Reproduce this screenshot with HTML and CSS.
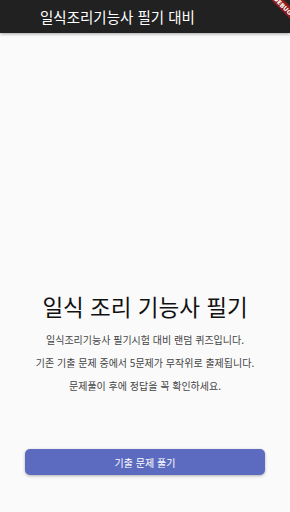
FILE: index.html
```html
<!DOCTYPE html>
<html lang="ko">
<head>
    <meta charset="UTF-8">
    <meta name="viewport" content="width=device-width, initial-scale=1.0">
    <title>일식조리기능사 필기 대비</title>
    <link rel="stylesheet" href="styles.css">
</head>
<body>
    <header class="app-bar">
        <h1 class="app-title">일식조리기능사 필기 대비</h1>
        <div class="debug-banner">DEBUG</div>
    </header>

    <main class="home">
        <section class="intro">
            <h2 class="intro-title">일식 조리 기능사 필기</h2>
            <p class="intro-text">일식조리기능사 필기시험 대비 랜덤 퀴즈입니다.</p>
            <p class="intro-text">기존 기출 문제 중에서 5문제가 무작위로 출제됩니다.</p>
            <p class="intro-text">문제풀이 후에 정답을 꼭 확인하세요.</p>
        </section>

        <button type="button" class="start-button">기출 문제 풀기</button>
    </main>
</body>
</html>
```

FILE: styles.css
```css
html, body {
    margin: 0;
    padding: 0;
    height: 100%;
}
body {
    font-family: "Noto Sans CJK KR", Roboto, sans-serif;
    background-color: #fafafa;
    color: #212121;
    overflow: hidden;
}
.app-bar {
    position: relative;
    height: 33px;
    background-color: #212121;
    box-shadow: 0 1px 3px rgba(0, 0, 0, 0.35);
    display: flex;
    align-items: center;
    padding-left: 40px;
    overflow: hidden;
}
.app-title {
    margin: 0;
    font-size: 14.5px;
    font-weight: 400;
    color: #fff;
}
.debug-banner {
    position: absolute;
    top: 1px;
    right: -23px;
    width: 60px;
    transform: rotate(45deg);
    background-color: #8e1b1b;
    color: #fff;
    font-family: "DejaVu Sans", sans-serif;
    font-size: 6px;
    font-weight: bold;
    text-align: center;
    line-height: 9px;
}
.home {
    display: flex;
    flex-direction: column;
    align-items: center;
    padding: 0 25px;
}
.intro {
    margin-top: 256px;
    text-align: center;
}
.intro-title {
    margin: 0 0 5px;
    font-size: 22.5px;
    font-weight: 400;
    color: #111;
    line-height: 34px;
}
.intro-text {
    margin: 0;
    font-size: 10px;
    line-height: 23px;
    color: #444;
}
.start-button {
    margin-top: 52px;
    width: 100%;
    height: 26px;
    border: none;
    border-radius: 5px;
    background-color: #5c6bc0;
    color: #fff;
    font-family: inherit;
    font-size: 10px;
    box-shadow: 0 1px 3px rgba(0, 0, 0, 0.3);
    cursor: pointer;
}
```
